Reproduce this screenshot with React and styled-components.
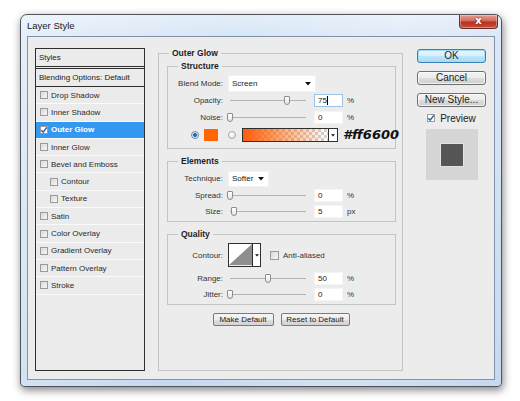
import React from 'react'
import styled, { createGlobalStyle } from 'styled-components'

const GlobalStyle = createGlobalStyle`
  html, body {
    margin: 0;
    padding: 0;
    background: #fff;
  }
  body {
    font-family: "Liberation Sans", Arial, sans-serif;
    color: #222;
  }
`

const layerStyles = [
    { name: 'Drop Shadow' },
    { name: 'Inner Shadow' },
    { name: 'Outer Glow', on: true },
    { name: 'Inner Glow' },
    { name: 'Bevel and Emboss' },
    { name: 'Contour', sub: true },
    { name: 'Texture', sub: true },
    { name: 'Satin' },
    { name: 'Color Overlay' },
    { name: 'Gradient Overlay' },
    { name: 'Pattern Overlay' },
    { name: 'Stroke' },
]

function Check({ color = '#2b5ea7' }) {
    return (
        <svg width="8" height="8" viewBox="0 0 8 8">
            <path d="M1.3 4.2 L3.2 6.2 L6.8 1.4" stroke={color} strokeWidth="1.5" fill="none" />
        </svg>
    )
}

function Arrow() {
    return (
        <svg width="6" height="4" viewBox="0 0 6 4">
            <path d="M0 0 H6 L3 3.5 Z" fill="#111" />
        </svg>
    )
}

function Slider({ pct }) {
    return (
        <Track>
            <Thumb style={{ left: 2 + pct * 0.76 }} />
        </Track>
    )
}

function SliderRow({ label, pct, value, unit = '%', focused, h }) {
    return (
        <Row $h={h}>
            <Label>{label}</Label>
            <Slider pct={pct} />
            <Field $focused={focused}>
                {value}
                {focused && <Caret />}
            </Field>
            <Unit>{unit}</Unit>
        </Row>
    )
}

function App() {
    return (
        <Page>
            <GlobalStyle />
            <Window>
                <TitleBar>
                    <Title>Layer Style</Title>
                    <CloseButton>x</CloseButton>
                </TitleBar>
                <Client>
                    <StylesPanel>
                        <PanelHeader>Styles</PanelHeader>
                        <BlendingRow>Blending Options: Default</BlendingRow>
                        {layerStyles.map(s => (
                            <StyleItem key={s.name} $on={s.on} $sub={s.sub}>
                                <Box $on={s.on}>{s.on && <Check />}</Box>
                                {s.name}
                            </StyleItem>
                        ))}
                    </StylesPanel>

                    <MainGroup>
                        <Legend>Outer Glow</Legend>

                        <SubGroup $pad="3px 0 6px 0">
                            <Legend>Structure</Legend>
                            <Row $h={17}>
                                <Label>Blend Mode:</Label>
                                <Select $w={88} $h={17}>
                                    Screen
                                    <Arrow />
                                </Select>
                            </Row>
                            <SliderRow label="Opacity:" pct={75} value="75" focused />
                            <SliderRow label="Noise:" pct={0} value="0" />
                            <ColorRow>
                                <Radio $on />
                                <Swatch />
                                <Radio />
                                <GradientPick>
                                    <GradientFill />
                                    <PickArrow><Arrow /></PickArrow>
                                </GradientPick>
                                <HexNote>#ff6600</HexNote>
                            </ColorRow>
                        </SubGroup>

                        <SubGroup $pad="3px 0 2px 0" $gap>
                            <Legend>Elements</Legend>
                            <Row $h={17}>
                                <Label>Technique:</Label>
                                <Select $w={41} $h={16}>
                                    Softer
                                    <Arrow />
                                </Select>
                            </Row>
                            <SliderRow label="Spread:" pct={0} value="0" h={16} />
                            <SliderRow label="Size:" pct={5} value="5" unit="px" h={16} />
                        </SubGroup>

                        <SubGroup $pad="3px 0 2px 0" $gap>
                            <Legend>Quality</Legend>
                            <ContourRow>
                                <Label>Contour:</Label>
                                <ContourPick>
                                    <svg width="23" height="21" viewBox="0 0 23 21">
                                        <rect width="23" height="21" fill="#fff" />
                                        <path d="M0 21 L23 0 V21 Z" fill="#8e8e8e" />
                                    </svg>
                                    <PickArrow $tall><Arrow /></PickArrow>
                                </ContourPick>
                                <AntiAlias>
                                    <Box $big />
                                    Anti-aliased
                                </AntiAlias>
                            </ContourRow>
                            <SliderRow label="Range:" pct={50} value="50" h={16} />
                            <SliderRow label="Jitter:" pct={0} value="0" h={16} />
                        </SubGroup>

                        <ResetRow>
                            <SmallButton $w={61}>Make Default</SmallButton>
                            <SmallButton $w={69}>Reset to Default</SmallButton>
                        </ResetRow>
                    </MainGroup>

                    <SideColumn>
                        <DialogButton $primary>OK</DialogButton>
                        <DialogButton>Cancel</DialogButton>
                        <DialogButton>New Style...</DialogButton>
                        <PreviewToggle>
                            <Box $on><Check /></Box>
                            Preview
                        </PreviewToggle>
                        <PreviewTile>
                            <PreviewSquare />
                        </PreviewTile>
                    </SideColumn>
                </Client>
            </Window>
        </Page>
    )
}

export default App

const Page = styled.div`
    padding: 14px 0 0 20px;
    width: 520px;
    height: 401px;
    box-sizing: border-box;
`

const Window = styled.div`
    width: 482px;
    height: 373px;
    box-sizing: border-box;
    border: 1px solid #4d545c;
    border-radius: 7px 7px 4px 4px;
    padding: 0 6px 6px 6px;
    background:
        linear-gradient(100deg, rgba(255,255,255,0.35) 0%, rgba(255,255,255,0) 40%, rgba(255,255,255,0.25) 70%, rgba(255,255,255,0) 100%),
        linear-gradient(180deg, #e4eef9 0%, #d6e5f5 22px, #c5d9ef 100%);
    box-shadow: 1px 3px 9px rgba(0, 0, 0, 0.5);
    display: flex;
    flex-direction: column;
`

const TitleBar = styled.div`
    height: 21px;
    display: flex;
    justify-content: space-between;
    align-items: flex-start;
    flex-shrink: 0;
`

const Title = styled.span`
    font-size: 9.5px;
    color: #1b1b1b;
    line-height: 21px;
`

const CloseButton = styled.div`
    width: 39px;
    height: 14px;
    margin-right: -3px;
    box-sizing: border-box;
    border: 1px solid #6e2a23;
    border-top: none;
    border-radius: 0 0 4px 4px;
    background: linear-gradient(180deg, #e7a193 0%, #d2685a 45%, #b4321f 55%, #c9503a 100%);
    box-shadow: inset 0 0 0 1px rgba(255,255,255,0.35);
    color: #fff;
    font-family: "DejaVu Sans", sans-serif;
    font-weight: bold;
    font-size: 10px;
    line-height: 12px;
    text-align: center;
    text-shadow: 0 0 2px #5a1208;
`

const Client = styled.div`
    flex: 1;
    background: #ececec;
    border: 1px solid #8193aa;
    display: flex;
    align-items: flex-start;
    padding: 11px 0 0 7px;
`

const StylesPanel = styled.div`
    width: 110px;
    height: 323px;
    box-sizing: border-box;
    border: 1px solid #2f2f2f;
    background: #ebebeb;
    flex-shrink: 0;
    font-size: 8px;
`

const PanelHeader = styled.div`
    height: 20px;
    box-sizing: border-box;
    border-bottom: 3px double #2f2f2f;
    padding-left: 3px;
    line-height: 17px;
`

const BlendingRow = styled.div`
    height: 18px;
    box-sizing: border-box;
    border-bottom: 1px solid #2f2f2f;
    padding-left: 3px;
    line-height: 17px;
`

const StyleItem = styled.div`
    height: 17.3px;
    box-sizing: border-box;
    border-bottom: 1px solid #fbfbfb;
    display: flex;
    align-items: center;
    gap: 3px;
    padding-left: ${p => p.$sub ? 14 : 4}px;
    background: ${p => p.$on ? '#3399f0' : 'transparent'};
    color: ${p => p.$on ? '#fff' : '#2a2a2a'};
    font-weight: ${p => p.$on ? 'bold' : 'normal'};
`

const Box = styled.span`
    width: ${p => p.$big ? 9 : 8}px;
    height: ${p => p.$big ? 9 : 8}px;
    box-sizing: border-box;
    border: 1px solid #9a9a9a;
    background: ${p => p.$on ? '#fff' : 'linear-gradient(135deg, #d9d9d9, #f7f7f7)'};
    display: inline-flex;
    align-items: center;
    justify-content: center;
    flex-shrink: 0;

    svg {
        margin: -1px;
    }
`

const MainGroup = styled.fieldset`
    margin: 0 0 0 13px;
    padding: 0;
    width: 245px;
    height: 323px;
    box-sizing: border-box;
    border: 1px solid #c4c4c4;
    flex-shrink: 0;
    min-width: 0;
`

const Legend = styled.legend`
    margin-left: 10px;
    padding: 0 3px;
    font-size: 8.5px;
    line-height: 11px;
    font-weight: bold;
    color: #1e1e1e;
`

const SubGroup = styled.fieldset`
    margin: ${p => p.$gap ? 7 : 2}px 6px 0 8px;
    padding: ${p => p.$pad};
    border: 1px solid #c4c4c4;
    min-width: 0;
`

const Row = styled.div`
    height: ${p => p.$h || 17}px;
    display: flex;
    align-items: center;
    font-size: 8px;
`

const Label = styled.span`
    width: 55px;
    margin-right: 5px;
    text-align: right;
    color: #333;
    flex-shrink: 0;
`

const Select = styled.div`
    width: ${p => p.$w}px;
    height: ${p => p.$h}px;
    box-sizing: border-box;
    background: #fff;
    border: 1px solid #f2f2f2;
    padding: 0 4px 0 3px;
    display: flex;
    align-items: center;
    justify-content: space-between;
    color: #222;
`

const Track = styled.div`
    position: relative;
    width: 78px;
    height: 11px;
    flex-shrink: 0;
    margin-right: 8px;

    &::before {
        content: "";
        position: absolute;
        left: 2px;
        right: 0;
        top: 5px;
        height: 1px;
        background: #b3b3b3;
    }
`

const Thumb = styled.span`
    position: absolute;
    top: 1px;
    width: 6px;
    height: 9px;
    margin-left: -3px;
    box-sizing: border-box;
    border: 1px solid #8c8c8c;
    border-radius: 1px 1px 3px 3px;
    background: linear-gradient(180deg, #ffffff, #e4e4e4);
`

const Field = styled.span`
    width: 29px;
    height: 13px;
    box-sizing: border-box;
    background: #fff;
    border: 1px solid ${p => p.$focused ? '#9cc2e6' : '#f4f4f4'};
    padding-left: 3px;
    display: flex;
    align-items: center;
    flex-shrink: 0;
    color: #222;
`

const Caret = styled.span`
    width: 1px;
    height: 9px;
    background: #000;
`

const Unit = styled.span`
    margin-left: 4px;
    color: #333;
`

const ColorRow = styled.div`
    height: 14px;
    margin-top: 2px;
    display: flex;
    align-items: center;
    padding-left: 23px;
    white-space: nowrap;

    & > * {
        flex-shrink: 0;
    }
`

const Radio = styled.span`
    width: 8px;
    height: 8px;
    box-sizing: border-box;
    border-radius: 50%;
    border: 1px solid ${p => p.$on ? '#6c8eae' : '#a9a9a9'};
    background: ${p => p.$on
        ? 'radial-gradient(circle, #2e6ea8 0 1.6px, #cfe3f3 2.2px)'
        : 'radial-gradient(circle at 40% 35%, #ffffff, #dcdcdc)'};
    margin-right: ${p => p.$on ? 5 : 6}px;
`

const Swatch = styled.span`
    width: 14px;
    height: 12px;
    background: #ff6600;
    margin-right: 10px;
`

const GradientPick = styled.div`
    width: 96px;
    height: 14px;
    box-sizing: border-box;
    border: 1px solid #2f2f2f;
    display: flex;
`

const GradientFill = styled.div`
    flex: 1;
    background:
        linear-gradient(90deg, #ff5a0a 0%, rgba(255, 102, 0, 0.55) 45%, rgba(255, 102, 0, 0) 100%),
        repeating-conic-gradient(#d2d2d2 0 25%, #ffffff 0 50%) 0 0 / 6px 6px;
`

const PickArrow = styled.div`
    width: ${p => p.$tall ? 8 : 9}px;
    box-sizing: border-box;
    border-left: 1px solid #2f2f2f;
    background: #fff;
    display: flex;
    align-items: center;
    justify-content: center;

    svg {
        width: 4px;
        height: 3px;
    }
`

const HexNote = styled.span`
    margin-left: 5px;
    font-family: "DejaVu Sans", sans-serif;
    font-weight: bold;
    font-style: italic;
    font-size: 13px;
    line-height: 14px;
    color: #111;
`

const ContourRow = styled(Row)`
    height: 24px;
    margin-bottom: 3px;
`

const ContourPick = styled.div`
    width: 33px;
    height: 24px;
    box-sizing: border-box;
    border: 1px solid #2f2f2f;
    display: flex;
    flex-shrink: 0;
    margin-right: 9px;

    svg {
        display: block;
    }
`

const AntiAlias = styled.span`
    display: flex;
    align-items: center;
    gap: 4px;
    color: #333;
`

const ResetRow = styled.div`
    display: flex;
    justify-content: center;
    gap: 7px;
    margin-top: 8px;
    padding-left: 1px;
`

const SmallButton = styled.button`
    width: ${p => p.$w}px;
    height: 13px;
    padding: 0;
    box-sizing: border-box;
    border: 1px solid #7a7a7a;
    border-radius: 2px;
    background: linear-gradient(180deg, #f6f6f6 0%, #ececec 50%, #dedede 51%, #d3d3d3 100%);
    font-family: "Liberation Sans", Arial, sans-serif;
    font-size: 8px;
    line-height: 11px;
    white-space: nowrap;
    color: #222;
`

const SideColumn = styled.div`
    width: 69px;
    margin-left: 14px;
    display: flex;
    flex-direction: column;
    align-items: center;
    padding-top: 1px;
    flex-shrink: 0;
`

const DialogButton = styled.button`
    width: 69px;
    height: 14px;
    margin-bottom: 8px;
    padding: 0;
    box-sizing: border-box;
    border: 1px solid ${p => p.$primary ? '#3c7fb1' : '#707070'};
    border-radius: 3px;
    background: ${p => p.$primary
        ? 'linear-gradient(180deg, #eaf6fd 0%, #d9f0fc 50%, #bee6fd 51%, #a7d9f5 100%)'
        : 'linear-gradient(180deg, #f2f2f2 0%, #ebebeb 50%, #dddddd 51%, #cfcfcf 100%)'};
    box-shadow: inset 0 0 0 1px ${p => p.$primary ? '#9fdcf7' : 'rgba(255,255,255,0.7)'};
    font-family: "Liberation Sans", Arial, sans-serif;
    font-size: 10px;
    line-height: 12px;
    color: #1d1d1d;
`

const PreviewToggle = styled.div`
    height: 12px;
    margin-top: -3px;
    display: flex;
    align-items: center;
    gap: 5px;
    font-size: 10px;
    color: #222;
`

const PreviewTile = styled.div`
    width: 52px;
    height: 51px;
    margin-top: 5px;
    background: #d5d5d5;
    display: flex;
    align-items: center;
    justify-content: center;
`

const PreviewSquare = styled.div`
    width: 24px;
    height: 24px;
    box-sizing: border-box;
    border: 1px solid #e3e3e3;
    background: #555555;
`
